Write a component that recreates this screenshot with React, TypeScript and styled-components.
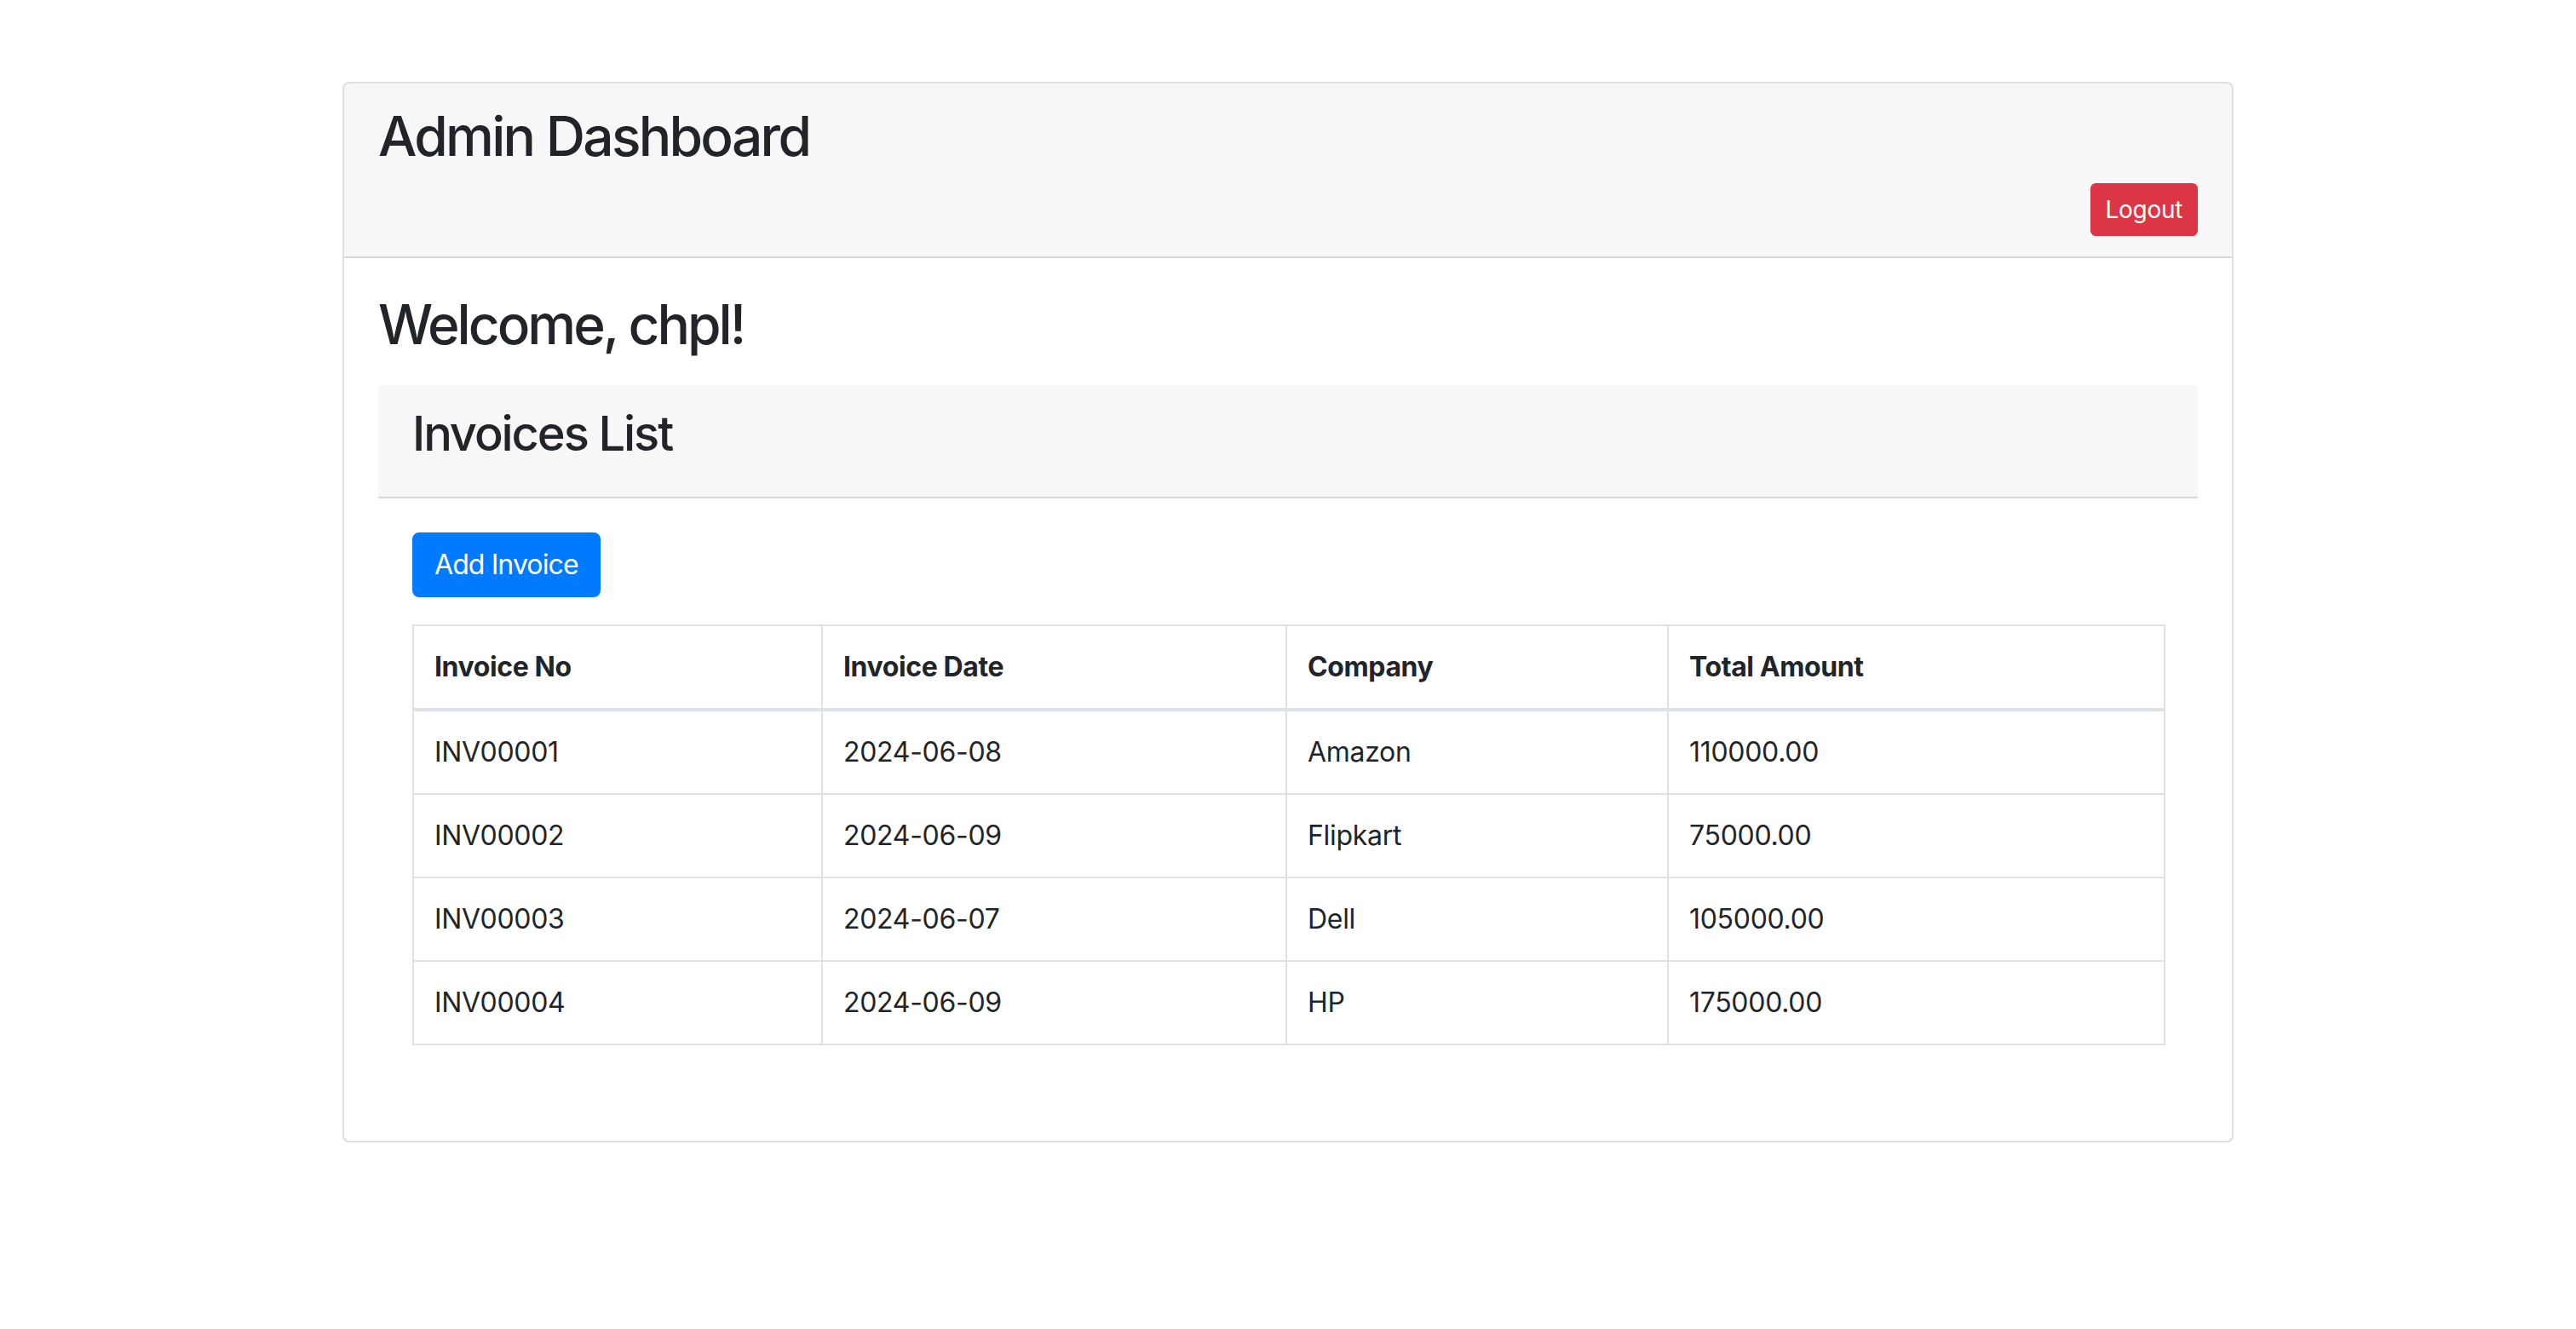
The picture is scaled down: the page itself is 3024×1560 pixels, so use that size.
import React from "react";
import styled, { createGlobalStyle } from "styled-components";

const GlobalStyle = createGlobalStyle`
  html, body {
    margin: 0;
    padding: 0;
    background: #ffffff;
  }
  body {
    font-family: Inter, "Noto Sans", "Liberation Sans", sans-serif;
    font-size: 32px;
    line-height: 1.5;
    color: #212529;
  }
  * { box-sizing: border-box; }
`;

const Page = styled.div`
  width: 2220px;
  margin: 96px auto 0;
`;

const Card = styled.section`
  display: flex;
  flex-direction: column;
  background: #ffffff;
  border: 2px solid rgba(0, 0, 0, 0.125);
  border-radius: 8px;
  overflow: hidden;
`;

const CardHeader = styled.header`
  background: rgba(0, 0, 0, 0.03);
  padding: 24px 40px;
  border-bottom: 2px solid rgba(0, 0, 0, 0.125);
`;

const PageTitle = styled.h2`
  margin: 0 0 16px;
  font-size: 64px;
  line-height: 1.2;
  font-weight: 500;
  letter-spacing: -2.7px;
`;

const HeaderActions = styled.div`
  display: flex;
  justify-content: flex-end;
`;

const Button = styled.button<{ $variant: "primary" | "danger"; $small?: boolean }>`
  display: inline-block;
  font-family: inherit;
  font-weight: 400;
  color: #ffffff;
  cursor: pointer;
  border: 2px solid ${(p) => (p.$variant === "primary" ? "#007bff" : "#dc3545")};
  background: ${(p) => (p.$variant === "primary" ? "#007bff" : "#dc3545")};
  padding: ${(p) => (p.$small ? "8px 16px" : "12px 24px")};
  font-size: ${(p) => (p.$small ? "28px" : "32px")};
  line-height: 1.5;
  border-radius: ${(p) => (p.$small ? "6.4px" : "8px")};
  letter-spacing: ${(p) => (p.$small ? "-0.3px" : "-0.9px")};
`;

const CardBody = styled.div`
  padding: 40px;
`;

const Welcome = styled.h2`
  margin: 0 0 16px;
  font-size: 64px;
  line-height: 1.2;
  font-weight: 500;
  letter-spacing: -3px;
`;

const InnerCard = styled.section`
  margin-top: 32px;
  display: flex;
  flex-direction: column;
`;

const InnerHeader = styled.header`
  background: rgba(0, 0, 0, 0.03);
  padding: 24px 40px;
  border-bottom: 2px solid rgba(0, 0, 0, 0.125);
`;

const SectionTitle = styled.h3`
  margin: 0 0 16px;
  font-size: 56px;
  line-height: 1.2;
  font-weight: 500;
  letter-spacing: -2.1px;
`;

const InnerBody = styled.div`
  padding: 40px;
`;

const Toolbar = styled.div`
  display: flex;
  margin-bottom: 32px;
`;

const Table = styled.table`
  width: 100%;
  table-layout: fixed;
  border-collapse: collapse;
  margin-bottom: 32px;
  border: 2px solid #dee2e6;
  color: #212529;
`;

const HeadCell = styled.th<{ $width: number }>`
  width: ${(p) => p.$width}px;
  padding: 24px;
  text-align: left;
  vertical-align: bottom;
  font-weight: 700;
  font-size: 32px;
  line-height: 1.5;
  letter-spacing: -0.4px;
  border: 2px solid #dee2e6;
  border-bottom: 4px solid #dee2e6;
`;

const Cell = styled.td`
  padding: 24px;
  vertical-align: top;
  font-size: 32px;
  line-height: 1.5;
  letter-spacing: -0.3px;
  border: 2px solid #dee2e6;
`;

const columns = [
  { label: "Invoice No", width: 480 },
  { label: "Invoice Date", width: 545 },
  { label: "Company", width: 448 },
  { label: "Total Amount", width: 583 },
];

const invoices = [
  { no: "INV00001", date: "2024-06-08", company: "Amazon", total: "110000.00" },
  { no: "INV00002", date: "2024-06-09", company: "Flipkart", total: "75000.00" },
  { no: "INV00003", date: "2024-06-07", company: "Dell", total: "105000.00" },
  { no: "INV00004", date: "2024-06-09", company: "HP", total: "175000.00" },
];

export default function App() {
  return (
    <>
      <GlobalStyle />
      <Page>
        <Card>
          <CardHeader>
            <PageTitle>Admin Dashboard</PageTitle>
            <HeaderActions>
              <Button $variant="danger" $small>
                Logout
              </Button>
            </HeaderActions>
          </CardHeader>
          <CardBody>
            <Welcome>Welcome, chpl!</Welcome>
            <InnerCard>
              <InnerHeader>
                <SectionTitle>Invoices List</SectionTitle>
              </InnerHeader>
              <InnerBody>
                <Toolbar>
                  <Button $variant="primary">Add Invoice</Button>
                </Toolbar>
                <Table>
                  <thead>
                    <tr>
                      {columns.map((c) => (
                        <HeadCell key={c.label} $width={c.width}>
                          {c.label}
                        </HeadCell>
                      ))}
                    </tr>
                  </thead>
                  <tbody>
                    {invoices.map((inv) => (
                      <tr key={inv.no}>
                        <Cell>{inv.no}</Cell>
                        <Cell>{inv.date}</Cell>
                        <Cell>{inv.company}</Cell>
                        <Cell>{inv.total}</Cell>
                      </tr>
                    ))}
                  </tbody>
                </Table>
              </InnerBody>
            </InnerCard>
          </CardBody>
        </Card>
      </Page>
    </>
  );
}
